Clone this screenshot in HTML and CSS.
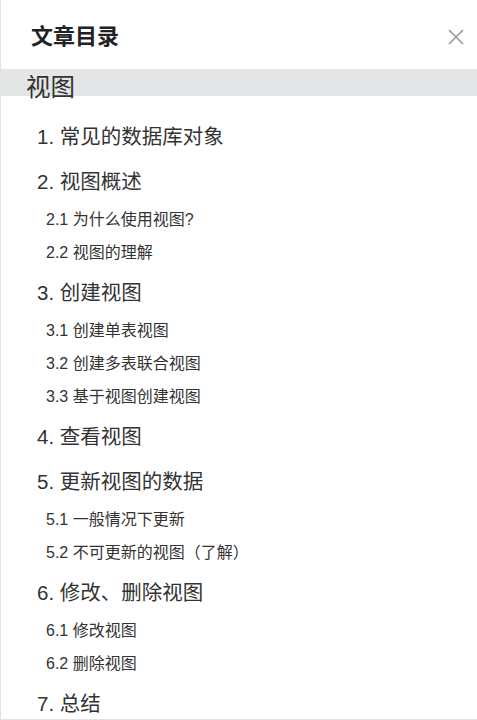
FILE: index.html
```html
<!DOCTYPE html>
<html lang="zh-CN">
<head>
<meta charset="utf-8">
<title>文章目录</title>
<link rel="stylesheet" href="styles.css">
</head>
<body>
<div class="panel">
  <div class="header">
    <h3 class="title">文章目录</h3>
    <span class="close" aria-label="关闭">
      <svg width="16" height="16" viewBox="0 0 16 16"><path d="M1 1L15 15M15 1L1 15" stroke="#999" stroke-width="1.7" fill="none"/></svg>
    </span>
  </div>
  <div class="bar"><span class="bar-text">视图</span></div>
  <ul class="toc">
    <li class="l1">1. 常见的数据库对象</li>
    <li class="l1">2. 视图概述</li>
    <li class="l2">2.1 为什么使用视图?</li>
    <li class="l2">2.2 视图的理解</li>
    <li class="l1">3. 创建视图</li>
    <li class="l2">3.1 创建单表视图</li>
    <li class="l2">3.2 创建多表联合视图</li>
    <li class="l2">3.3 基于视图创建视图</li>
    <li class="l1">4. 查看视图</li>
    <li class="l1">5. 更新视图的数据</li>
    <li class="l2">5.1 一般情况下更新</li>
    <li class="l2">5.2 不可更新的视图（了解）</li>
    <li class="l1">6. 修改、删除视图</li>
    <li class="l2">6.1 修改视图</li>
    <li class="l2">6.2 删除视图</li>
    <li class="l1">7. 总结</li>
  </ul>
</div>
</body>
</html>
```
FILE: styles.css
```css
html, body {
  margin: 0;
  padding: 0;
  background: #fff;
}
body {
  font-family: "Liberation Sans", "Noto Sans CJK SC", sans-serif;
  color: #333;
}
.panel {
  width: 477px;
  height: 720px;
  box-sizing: border-box;
  border-left: 1px solid #e2e2e2;
  border-bottom: 1px solid #e2e2e2;
  overflow: hidden;
}
.header {
  height: 69px;
  box-sizing: border-box;
  padding: 4px 13px 0 30px;
  display: flex;
  align-items: center;
  justify-content: space-between;
}
.title {
  margin: 0;
  font-size: 22px;
  font-weight: bold;
  color: #222;
  line-height: 30px;
}
.close {
  display: flex;
  width: 16px;
  height: 16px;
}
.bar {
  height: 27px;
  margin-left: -1px;
  background: #e4e5e7;
  box-sizing: border-box;
  padding: 5px 0 0 26px;
  line-height: 27px;
  font-size: 24.5px;
  color: #333;
}
.bar-text {
  display: block;
  height: 22px;
}
.toc {
  list-style: none;
  margin: 0;
  padding: 18px 0 0 0;
}
.l1 {
  height: 45px;
  line-height: 45px;
  font-size: 20.5px;
  padding-left: 36px;
  color: #333;
}
.l2 {
  height: 33px;
  box-sizing: border-box;
  line-height: 31px;
  padding: 0 0 2px 45px;
  font-size: 16px;
  color: #333;
}
```
